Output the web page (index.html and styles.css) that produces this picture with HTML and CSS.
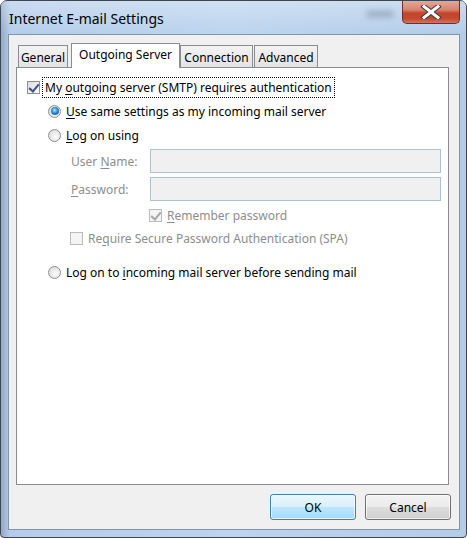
FILE: index.html
```html
<!DOCTYPE html>
<html lang="en">
<head>
    <meta charset="UTF-8">
    <title>Internet E-mail Settings</title>
    <link rel="stylesheet" href="styles.css">
</head>
<body>
    <div class="window">
        <div class="titlebar">
            <span class="title">Internet E-mail Settings</span>
            <span class="ghost"></span>
            <span class="close">
                <svg width="22" height="14" viewBox="0 0 22 14">
                    <path d="M4 1.5 L18 12.5 M18 1.5 L4 12.5" stroke="#3b3b3b" stroke-width="5" stroke-linecap="square"/>
                    <path d="M4 1.5 L18 12.5 M18 1.5 L4 12.5" stroke="#fff" stroke-width="3" stroke-linecap="square"/>
                </svg>
            </span>
        </div>
        <div class="client">
            <div class="tabs">
                <div class="tab general">General</div>
                <div class="tab active">Outgoing Server</div>
                <div class="tab connection">Connection</div>
                <div class="tab advanced">Advanced</div>
            </div>
            <div class="panel">
                <div class="row top">
                    <span class="check checked"></span>
                    <span class="focus">My <u>o</u>utgoing server (SMTP) requires authentication</span>
                </div>
                <div class="row sub">
                    <span class="radio selected"></span>
                    <span class="text"><u>U</u>se same settings as my incoming mail server</span>
                </div>
                <div class="row sub">
                    <span class="radio"></span>
                    <span class="text"><u>L</u>og on using</span>
                </div>
                <div class="field first">
                    <span class="field-label">User <u>N</u>ame:</span>
                    <span class="input"></span>
                </div>
                <div class="field">
                    <span class="field-label"><u>P</u>assword:</span>
                    <span class="input"></span>
                </div>
                <div class="row remember">
                    <span class="check checked disabled"></span>
                    <span class="text muted"><u>R</u>emember password</span>
                </div>
                <div class="row spa">
                    <span class="check disabled"></span>
                    <span class="text muted">Re<u>q</u>uire Secure Password Authentication (SPA)</span>
                </div>
                <div class="row sub last">
                    <span class="radio"></span>
                    <span class="text">Log on to <u>i</u>ncoming mail server before sending mail</span>
                </div>
            </div>
            <div class="buttons">
                <button class="btn default">OK</button>
                <button class="btn">Cancel</button>
            </div>
        </div>
    </div>
</body>
</html>
```

FILE: styles.css
```css
body { margin: 0; background: #fff; font-family: "Noto Sans", "DejaVu Sans", sans-serif; font-size: 12px; color: #000; }
u { text-decoration: underline; text-underline-offset: 2px; }

.window { width: 467px; height: 538px; box-sizing: border-box; border: 1px solid #3d4652; border-radius: 7px 7px 4px 4px; background: linear-gradient(90deg, #93abc6 0, #b5cdea 2%, #bcd4ee 50%, #b3cce8 100%); display: flex; flex-direction: column; }
.titlebar { height: 33px; display: flex; align-items: flex-start; padding-left: 8px; background: linear-gradient(180deg, rgba(255,255,255,0.3), rgba(255,255,255,0)); }
.title { font-size: 14px; margin-top: 8px; flex: 1; color: #000; }
.ghost { width: 28px; height: 6px; margin: 10px 8px 0 0; background: #6f8196; border-radius: 4px; filter: blur(3px); opacity: 0.55; }
.close { width: 58px; height: 23px; margin-right: 6px; box-sizing: border-box; border: 1px solid #6e3027; border-top: none; border-radius: 0 0 5px 5px; background: linear-gradient(180deg, #e4a898 0, #d8836d 40%, #c2452c 55%, #c5492e 80%, #d47461 100%); display: flex; align-items: center; justify-content: center; }

.client { flex: 1; margin: 0 6px 7px 7px; border: 1px solid #8294ab; background: #f0f0f0; padding: 8px 0 0 7px; display: flex; flex-direction: column; }

.tabs { display: flex; align-items: flex-end; height: 24px; padding-left: 2px; position: relative; z-index: 1; }
.tab { height: 22px; box-sizing: border-box; border: 1px solid #898c95; border-bottom: none; background: linear-gradient(180deg, #f3f3f3, #e3e3e3); padding-top: 3px; text-align: center; }
.tab.general { width: 50px; margin-right: 3px; }
.tab.active { width: 109px; height: 25px; margin-bottom: -1px; background: #fff; padding-top: 2px; }
.tab.connection { width: 73px; margin-right: 1px; }
.tab.advanced { width: 64px; }

.panel { width: 433px; height: 418px; box-sizing: border-box; border: 1px solid #898c95; background: #fff; padding-top: 7px; }

.row { display: flex; align-items: center; height: 24px; }
.row.top { padding-left: 10px; }
.row.sub { padding-left: 31px; }
.row.remember { padding-left: 132px; margin-top: 2px; }
.row.spa { padding-left: 53px; height: 22px; }
.row.last { margin-top: 11px; }
.text { margin-left: 5px; }
.muted { color: #8d8d8d; }
.focus { margin-left: 3px; padding: 1px 2px; outline: 1px dotted #000; }

.check { width: 13px; height: 13px; box-sizing: border-box; border: 1px solid #8e8f8f; background: linear-gradient(135deg, #dcdcdc, #fbfbfb); position: relative; flex: none; }
.check.checked::after { content: ""; position: absolute; left: 3px; top: 0; width: 4px; height: 8px; border: solid #3c4f95; border-width: 0 2px 2px 0; transform: rotate(40deg); }
.check.disabled { border-color: #bcbcbc; background: #f4f4f4; }
.check.checked.disabled::after { border-color: #a6a6a6; }

.radio { width: 13px; height: 13px; box-sizing: border-box; border-radius: 50%; border: 1px solid #8e8f8f; background: radial-gradient(circle at 60% 60%, #fcfcfc 0, #e4e4e4 60%, #d0d0d0 100%); flex: none; position: relative; }
.radio.selected::after { content: ""; position: absolute; left: 1.5px; top: 1.5px; width: 8px; height: 8px; border-radius: 50%; background: radial-gradient(circle at 45% 40%, #b5eaff 0, #2a8ad4 45%, #163f7a 100%); }

.field { display: flex; align-items: center; height: 24px; padding-left: 54px; margin-top: 4px; }
.field.first { margin-top: 2px; }
.field-label { width: 79px; color: #8d8d8d; }
.input { width: 291px; height: 24px; box-sizing: border-box; border: 1px solid #afc1d4; background: #f0f0f0; }

.buttons { display: flex; justify-content: flex-end; gap: 9px; padding: 9px 8px 0 0; }
.btn { width: 86px; height: 26px; font: inherit; border-radius: 3px; border: 1px solid #707070; background: linear-gradient(180deg, #f2f2f2 0, #ebebeb 50%, #dddddd 51%, #cfcfcf 100%); box-shadow: inset 0 0 0 1px rgba(255,255,255,0.7); padding: 0; }
.btn.default { border-color: #3c7fb1; background: linear-gradient(180deg, #eaf6fd 0, #d9f0fc 50%, #bee6fd 51%, #a7d9f5 100%); }
```
